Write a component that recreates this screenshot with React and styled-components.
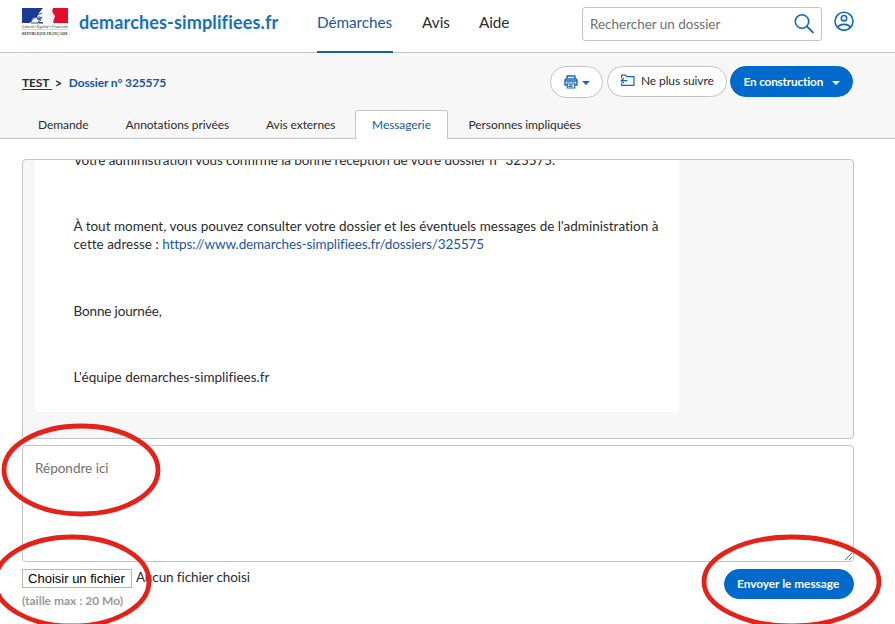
import React from "react";
import styled, { createGlobalStyle, css } from "styled-components";

const BLUE = "#0069cc";
const LINK = "#1c55a3";
const LINE = "#c4c4c4";

const GlobalStyle = createGlobalStyle`
  * { box-sizing: border-box; }
  body {
    margin: 0;
    background: #fff;
    color: #2b2b2f;
    font-family: Lato, "Open Sans", sans-serif;
    font-size: 13.5px;
    overflow: hidden;
  }
  button, input, textarea { font-family: inherit; }
`;

const Page = styled.div`
  width: 895px;
  height: 624px;
  overflow: hidden;
  display: flex;
  flex-direction: column;
`;

const Header = styled.header`
  height: 53px;
  flex: none;
  display: flex;
  border-bottom: 1px solid ${LINE};
  padding-left: 22px;
`;

const Logo = styled.svg`
  width: 47px;
  height: 30px;
  margin-top: 7px;
  flex: none;
`;

const Brand = styled.a`
  width: 238px;
  padding-left: 10px;
  font-size: 18px;
  font-weight: 700;
  line-height: 44px;
  letter-spacing: 0.14px;
  color: #176fc1;
  white-space: nowrap;
`;

const Nav = styled.nav`
  display: flex;
  gap: 29px;
  width: 275px;
  margin-left: 10px;
`;

const NavItem = styled.a`
  height: 53px;
  font-size: 15.3px;
  line-height: 45px;
  letter-spacing: ${(p) => p.$spacing || "0"};
  ${(p) =>
    p.$active &&
    css`
      width: 76px;
      color: ${LINK};
      border-bottom: 2px solid #1c6091;
    `}
`;

const SearchBox = styled.div`
  display: flex;
  align-items: center;
  width: 240px;
  height: 34px;
  margin: 7px 0 0 -10px;
  padding: 0 7px 0 6px;
  border: 1px solid ${LINE};
  border-radius: 3px;
`;

const SearchInput = styled.input`
  flex: 1;
  min-width: 0;
  border: 0;
  padding: 0 0 0 1px;
  outline: 0;
  font-size: 13.5px;
  letter-spacing: -0.02px;
  background: none;
  &::placeholder { color: #6f6f6f; opacity: 1; }
`;

const Icon = styled.svg`
  width: ${(p) => p.$w}px;
  height: ${(p) => p.$h}px;
  flex: none;
  fill: none;
  stroke: #1666b5;
  stroke-width: ${(p) => p.$stroke || 1.6};
  stroke-linecap: round;
  stroke-linejoin: round;
`;

const Account = styled.a`
  margin: 11px 0 0 12px;
  height: 20px;
  display: flex;
`;

const SubHeader = styled.section`
  height: 86px;
  flex: none;
  display: flex;
  flex-direction: column;
  justify-content: space-between;
  background: #f7f7f7;
  box-shadow: inset 0 -1px ${LINE};
`;

const TitleRow = styled.div`
  display: flex;
  justify-content: space-between;
  padding: 13px 42px 0 22px;
`;

const Breadcrumb = styled.div`
  display: flex;
  font-size: 12px;
  font-weight: 700;
  line-height: 34px;
  letter-spacing: -0.13px;
  white-space: pre;
`;

const Crumb = styled.a`
  text-decoration: underline;
  text-underline-offset: 2px;
`;

const Separator = styled.span`
  width: 17px;
  padding-left: 3px;
  font-size: 13px;
`;

const CurrentCrumb = styled.span`
  color: ${LINK};
`;

const Actions = styled.div`
  display: flex;
  align-items: flex-start;
`;

const Pill = styled.button`
  display: flex;
  align-items: center;
  width: ${(p) => p.$w}px;
  height: ${(p) => p.$h || 31}px;
  margin-left: ${(p) => p.$ml || 0}px;
  padding: 0 0 ${(p) => (p.$primary || p.$h ? 1 : 2)}px ${(p) => p.$pl || 12}px;
  border: 1px solid ${(p) => (p.$primary ? BLUE : LINE)};
  border-radius: 16px;
  background: ${(p) => (p.$primary ? BLUE : "#fff")};
  color: ${(p) => (p.$primary ? "#fff" : "#2b2b2f")};
  font-size: ${(p) => (p.$primary ? 11.8 : 12)}px;
  font-weight: ${(p) => (p.$primary ? 700 : 400)};
  letter-spacing: ${(p) => p.$spacing || "-0.12px"};
  white-space: nowrap;
`;

const PillLabel = styled.span`
  padding-left: ${(p) => p.$pl || 0}px;
`;

const Caret = styled.span`
  margin: 3px 0 0 ${(p) => p.$ml}px;
  border: 4px solid transparent;
  border-top: 4px solid ${(p) => p.$color};
  border-bottom: 0;
`;

const Tabs = styled.nav`
  display: flex;
  padding-left: 22px;
`;

const Tab = styled.a`
  width: ${(p) => p.$w}px;
  height: 29px;
  padding-left: ${(p) => p.$pl}px;
  border: 1px solid transparent;
  border-bottom: 0;
  font-size: 12px;
  line-height: 28px;
  letter-spacing: -0.08px;
  white-space: nowrap;
  ${(p) =>
    p.$active &&
    css`
      color: ${LINK};
      background: #fff;
      border-color: ${LINE};
      border-radius: 3px 3px 0 0;
    `}
`;

const Main = styled.main`
  display: flex;
  flex-direction: column;
  padding: 20px 41px 0 22px;
`;

const Thread = styled.div`
  height: 280px;
  display: flex;
  flex-direction: column;
  justify-content: flex-end;
  overflow: hidden;
  padding: 0 0 26px 12px;
  background: #f7f7f7;
  border: 1px solid ${LINE};
  border-radius: 4px;
`;

const Message = styled.article`
  flex: none;
  width: 644px;
  padding: 30px 0 26px 38.5px;
  display: flex;
  flex-direction: column;
  gap: 48.5px;
  background: #fff;
  border-radius: 3px;
  line-height: 18px;
  font-variant-ligatures: none;
`;

const Paragraph = styled.p`
  margin: 0;
  white-space: nowrap;
  letter-spacing: ${(p) => p.$spacing || "0"};
`;

const TextLink = styled.a`
  color: ${LINK};
  letter-spacing: -0.12px;
`;

const Reply = styled.textarea`
  display: block;
  height: 117px;
  margin-top: 6px;
  padding: 13px 12px;
  border: 1px solid ${LINE};
  border-radius: 4px;
  outline: 0;
  resize: vertical;
  font-size: 13.5px;
  line-height: 18px;
  &::placeholder { color: #707070; opacity: 1; }
`;

const FormFooter = styled.div`
  display: flex;
  justify-content: space-between;
  padding-top: 7px;
`;

const FileRow = styled.div`
  display: flex;
  gap: 4px;
  line-height: 17px;
`;

const FileButton = styled.button`
  width: 110px;
  height: 19px;
  padding: 0 1px 0 0;
  border: 1px solid #b5b5b5;
  background: #fff;
  color: #000;
  font: 13px/16px "Liberation Sans", Arial, sans-serif;
  white-space: nowrap;
`;

const FileName = styled.span`
  letter-spacing: -0.1px;
`;

const Hint = styled.div`
  padding-top: 4px;
  color: #999;
  font-size: 12px;
  font-weight: 700;
  line-height: 17px;
`;

const Highlights = styled.svg`
  position: absolute;
  left: 0;
  top: 0;
  width: 895px;
  height: 624px;
  pointer-events: none;
  fill: none;
  stroke: #e52219;
  stroke-width: 4.8;
`;

const TABS = [
  ["Demande", 87, 15],
  ["Annotations privées", 141, 15.5],
  ["Avis externes", 105, 15],
  ["Messagerie", 93, 16],
  ["Personnes impliquées", 150, 19.5],
];

function RepublicLogo() {
  return (
    <Logo viewBox="0 0 47 30">
      <path d="M0 1h21l-4 5-2 4-4 1-3 5H0z" fill="#1b3a93" />
      <path d="M31 1h15v15H31l1-4 1-3-3-4z" fill="#e30d2c" />
      <path d="M28 1l2 3 1 3 1 2-1 2v3l-2 1-2-2 1-3-2-3z" fill="#eceef2" />
      <path d="M9 15c2-4 5-5 9-5l2 1-5 1 4 1-3 2 5 1H9M15 8l5-2" fill="none" stroke="#1b3a93" strokeWidth=".9" />
      <text x="0" y="21" fontFamily="Liberation Serif, serif" fontStyle="italic" fontSize="4.3" textLength="46" fill="#444">Liberté • Égalité • Fraternité</text>
      <path d="M0 22.5h46" stroke="#999" strokeWidth=".4" />
      <text x="0" y="27.5" fontFamily="Liberation Serif, serif" fontWeight="700" fontSize="4.7" textLength="46" lengthAdjust="spacingAndGlyphs" fill="#333">RÉPUBLIQUE FRANÇAISE</text>
    </Logo>
  );
}

export default function App() {
  return (
    <Page>
      <GlobalStyle />
      <Header>
        <RepublicLogo />
        <Brand>demarches-simplifiees.fr</Brand>
        <Nav>
          <NavItem $active $spacing="-0.05px">Démarches</NavItem>
          <NavItem>Avis</NavItem>
          <NavItem $spacing="-0.1px">Aide</NavItem>
        </Nav>
        <SearchBox>
          <SearchInput placeholder="Rechercher un dossier" />
          <Icon $w={20} $h={20} viewBox="0 0 20 20">
            <circle cx="8" cy="7.5" r="6.7" />
            <path d="M12.900 12.400l6 6" strokeWidth="1.9" />
          </Icon>
        </SearchBox>
        <Account>
          <Icon $w={20} $h={20} viewBox="0 0 20 20" $stroke={1.6}>
            <circle cx="10" cy="10.300" r="9" />
            <circle cx="10" cy="7.200" r="2.7" />
            <path d="M3.900 16.600c.7-2.300 3-3.200 6.100-3.200s5.400.9 6.100 3.200" />
          </Icon>
        </Account>
      </Header>

      <SubHeader>
        <TitleRow>
          <Breadcrumb>
            <Crumb>{"TEST "}</Crumb>
            <Separator>&gt;</Separator>
            <CurrentCrumb>Dossier n° 325575</CurrentCrumb>
          </Breadcrumb>
          <Actions>
            <Pill $w={53} $h={32} $pl={13}>
              <Icon $w={14} $h={14} viewBox="0 0 14 14" $stroke={1.4}>
                <path d="M3 4V1h8v3M2.800 10H1V5.200C1 4.500 1.500 4 2.200 4h9.600c.7 0 1.200.5 1.200 1.200V10h-1.800M1.500 6h11" />
                <path d="M3.200 8h7.600v5H3.200zM5 9.800h4M5 11.400h3" strokeWidth="1.100" />
              </Icon>
              <Caret $ml={4} $color="#1666b5" />
            </Pill>
            <Pill $w={120} $ml={4} $pl={12}>
              <Icon $w={16} $h={13} viewBox="0 0 16 13" $stroke={1.2}>
                <path d="M1.500 4V1.200h4l1.200 1.500h7.300v8.600H1.500V9.500" />
                <path d="M7 6.700H1.300M3.600 4.500L1.300 6.700l2.300 2.200" />
              </Icon>
              <PillLabel $pl={5}>Ne plus suivre</PillLabel>
            </Pill>
            <Pill $primary $w={123} $ml={3} $pl={12.5} $spacing="-0.18px">
              <PillLabel>En construction</PillLabel>
              <Caret $ml={9} $color="#fff" />
            </Pill>
          </Actions>
        </TitleRow>
        <Tabs>
          {TABS.map(([label, width, inset]) => (
            <Tab key={label} $w={width} $pl={inset} $active={label === "Messagerie"}>
              {label}
            </Tab>
          ))}
        </Tabs>
      </SubHeader>

      <Main>
        <Thread>
          <Message>
            <Paragraph $spacing="-0.09px">
              Votre administration vous confirme la bonne réception de votre dossier n° 325575.
            </Paragraph>
            <Paragraph>
              À tout moment, vous pouvez consulter votre dossier et les éventuels messages de l'administration à
              <br />
              cette adresse : <TextLink>https://www.demarches-simplifiees.fr/dossiers/325575</TextLink>
            </Paragraph>
            <Paragraph $spacing="-0.14px">Bonne journée,</Paragraph>
            <Paragraph>L'équipe demarches-simplifiees.fr</Paragraph>
          </Message>
        </Thread>
        <Reply placeholder="Répondre ici" />
        <FormFooter>
          <div>
            <FileRow>
              <FileButton>Choisir un fichier</FileButton>
              <FileName>Aucun fichier choisi</FileName>
            </FileRow>
            <Hint>(taille max : 20 Mo)</Hint>
          </div>
          <Pill $primary $w={130} $h={30} $pl={12} $spacing="0">
            <PillLabel>Envoyer le message</PillLabel>
          </Pill>
        </FormFooter>
      </Main>

      <Highlights viewBox="0 0 895 624">
        <ellipse cx="81" cy="470" rx="77" ry="44" />
        <ellipse cx="72" cy="581.500" rx="77" ry="44.500" />
        <ellipse cx="791.500" cy="581.500" rx="87.500" ry="44.500" />
      </Highlights>
    </Page>
  );
}
